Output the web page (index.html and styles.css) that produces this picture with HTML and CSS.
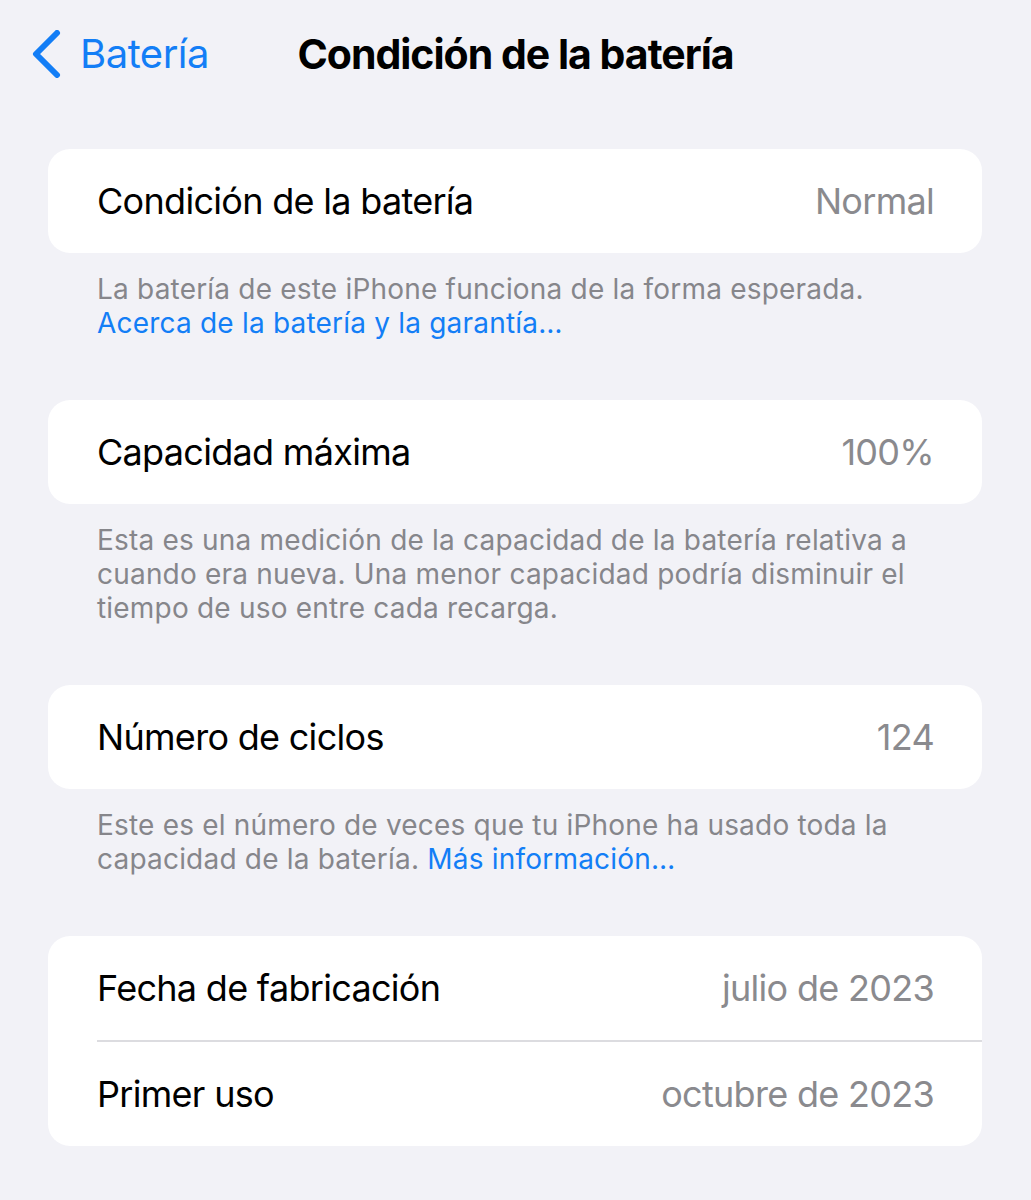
FILE: index.html
```html
<!DOCTYPE html>
<html lang="es">
<head>
    <meta charset="UTF-8">
    <meta name="viewport" content="width=device-width, initial-scale=1.0">
    <title>Condición de la batería</title>
    <link rel="stylesheet" href="styles.css">
</head>
<body>

    <header class="nav-bar">
        <a class="back-link" href="#">
            <svg class="chevron" width="30" height="48" viewBox="0 0 30 48">
                <path d="M26 3 L5 24 L26 45" fill="none" stroke="currentColor" stroke-width="6" stroke-linecap="round" stroke-linejoin="round"/>
            </svg>
            <span>Batería</span>
        </a>
        <h1 class="nav-title">Condición de la batería</h1>
        <div></div>
    </header>

    <main class="settings">
        <section class="group">
            <div class="card">
                <div class="row">
                    <span class="row-label">Condición de la batería</span>
                    <span class="row-value">Normal</span>
                </div>
            </div>
            <p class="group-footer">
                La batería de este iPhone funciona de la forma esperada.<br>
                <a href="#">Acerca de la batería y la garantía…</a>
            </p>
        </section>

        <section class="group">
            <div class="card">
                <div class="row">
                    <span class="row-label">Capacidad máxima</span>
                    <span class="row-value">100%</span>
                </div>
            </div>
            <p class="group-footer">
                Esta es una medición de la capacidad de la batería relativa a cuando era nueva. Una menor capacidad podría disminuir el tiempo de uso entre cada recarga.
            </p>
        </section>

        <section class="group">
            <div class="card">
                <div class="row">
                    <span class="row-label">Número de ciclos</span>
                    <span class="row-value">124</span>
                </div>
            </div>
            <p class="group-footer">
                Este es el número de veces que tu iPhone ha usado toda la capacidad de la batería. <a href="#">Más información…</a>
            </p>
        </section>

        <section class="group">
            <div class="card">
                <div class="row">
                    <span class="row-label">Fecha de fabricación</span>
                    <span class="row-value">julio de 2023</span>
                </div>
                <div class="row">
                    <span class="row-label">Primer uso</span>
                    <span class="row-value">octubre de 2023</span>
                </div>
            </div>
        </section>
    </main>

</body>
</html>
```

FILE: styles.css
```css
body {
    margin: 0;
    font-family: Inter, "Noto Sans", sans-serif;
    background-color: #f2f2f7;
    color: #000;
}

a {
    color: #137ef6;
    text-decoration: none;
}

/* top navigation */
.nav-bar {
    display: grid;
    grid-template-columns: 1fr auto 1fr;
    align-items: center;
    padding: 28px 0 0;
    height: 52px;
}

.back-link {
    display: flex;
    align-items: center;
    gap: 19px;
    padding-left: 31px;
    font-size: 40px;
    line-height: 52px;
    letter-spacing: -0.5px;
}

.chevron {
    display: block;
}

.nav-title {
    margin: 0;
    font-size: 41px;
    font-weight: 700;
    line-height: 52px;
    letter-spacing: -1px;
}

/* grouped list */
.settings {
    margin: 0 49px 0 48px;
    padding-top: 69px;
}

.group {
    margin-bottom: 60px;
}

.card {
    background-color: #fff;
    border-radius: 22px;
    overflow: hidden;
}

.row {
    display: flex;
    justify-content: space-between;
    align-items: center;
    height: 104px;
    margin-left: 49px;
    padding-right: 48px;
    font-size: 36px;
    letter-spacing: -0.7px;
}

.row + .row {
    border-top: 2px solid #dcdce0;
}

.row-value {
    color: #8a8a8e;
}

.group-footer {
    margin: 0;
    padding: 19px 49px 0;
    font-size: 28px;
    line-height: 34px;
    letter-spacing: 0.2px;
    color: #86868b;
}
```
